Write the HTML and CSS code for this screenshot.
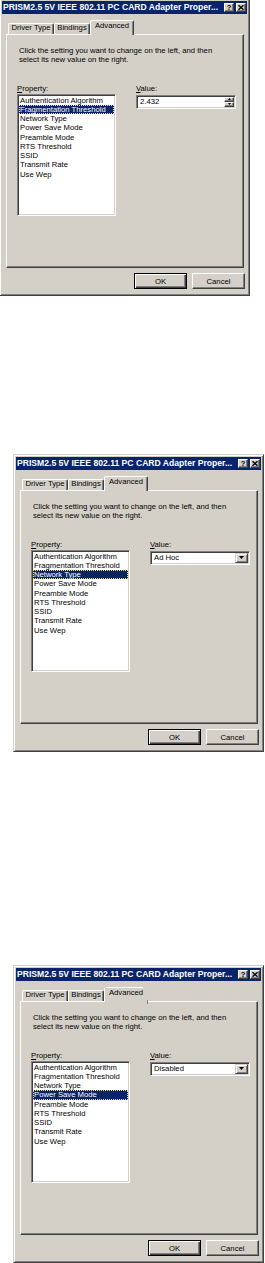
FILE: index.html
```html
<!DOCTYPE html>
<html lang="en">
<head>
    <meta charset="UTF-8">
    <meta name="viewport" content="width=device-width, initial-scale=1.0">
    <title>PRISM2.5 Adapter Properties</title>
    <link rel="stylesheet" href="styles.css">
</head>
<body>
    <div class="page">

        <!-- Fragmentation Threshold selected, spin box value -->
        <div class="dialog dialog-first">
            <div class="titlebar">
                <span class="title">PRISM2.5 5V IEEE 802.11 PC CARD Adapter Proper...</span>
                <span class="title-button">?</span>
                <span class="title-button">
                    <svg width="6" height="5" viewBox="0 0 6 5"><path d="M0.5 0.3L5.5 4.7M5.5 0.3L0.5 4.7" stroke="#000" stroke-width="1.4"/></svg>
                </span>
            </div>
            <div class="dialog-body">
                <div class="tabs">
                    <div class="tab tab-driver">Driver Type</div>
                    <div class="tab tab-bindings">Bindings</div>
                    <div class="tab tab-advanced active"><span class="tab-text">Advanced</span></div>
                </div>
                <div class="panel">
                    <p class="hint">Click the setting you want to change on the left, and then<br>select its new value on the right.</p>
                    <div class="fields">
                        <div class="field-property">
                            <span class="field-label"><u>P</u>roperty:</span>
                            <ul class="property-list">
                                <li>Authentication Algorithm</li>
                                <li class="selected">Fragmentation Threshold</li>
                                <li>Network Type</li>
                                <li>Power Save Mode</li>
                                <li>Preamble Mode</li>
                                <li>RTS Threshold</li>
                                <li>SSID</li>
                                <li>Transmit Rate</li>
                                <li>Use Wep</li>
                            </ul>
                        </div>
                        <div class="field-value">
                            <span class="field-label"><u>V</u>alue:</span>
                            <div class="value-box">
                                <span class="value-text">2.432</span>
                                <span class="spin-buttons">
                                    <span class="spin-button">
                                        <svg width="3" height="2" viewBox="0 0 3 2"><path d="M1.5 0L3 2H0z"/></svg>
                                    </span>
                                    <span class="spin-button">
                                        <svg width="3" height="2" viewBox="0 0 3 2"><path d="M0 0h3L1.5 2z"/></svg>
                                    </span>
                                </span>
                            </div>
                        </div>
                    </div>
                </div>
                <div class="buttons">
                    <button class="btn btn-default">OK</button>
                    <button class="btn">Cancel</button>
                </div>
            </div>
        </div>

        <!-- Network Type selected, drop-down value -->
        <div class="dialog dialog-second">
            <div class="titlebar">
                <span class="title">PRISM2.5 5V IEEE 802.11 PC CARD Adapter Proper...</span>
                <span class="title-button">?</span>
                <span class="title-button">
                    <svg width="6" height="5" viewBox="0 0 6 5"><path d="M0.5 0.3L5.5 4.7M5.5 0.3L0.5 4.7" stroke="#000" stroke-width="1.4"/></svg>
                </span>
            </div>
            <div class="dialog-body">
                <div class="tabs">
                    <div class="tab tab-driver">Driver Type</div>
                    <div class="tab tab-bindings">Bindings</div>
                    <div class="tab tab-advanced active"><span class="tab-text">Advanced</span></div>
                </div>
                <div class="panel">
                    <p class="hint">Click the setting you want to change on the left, and then<br>select its new value on the right.</p>
                    <div class="fields">
                        <div class="field-property">
                            <span class="field-label"><u>P</u>roperty:</span>
                            <ul class="property-list">
                                <li>Authentication Algorithm</li>
                                <li>Fragmentation Threshold</li>
                                <li class="selected">Network Type</li>
                                <li>Power Save Mode</li>
                                <li>Preamble Mode</li>
                                <li>RTS Threshold</li>
                                <li>SSID</li>
                                <li>Transmit Rate</li>
                                <li>Use Wep</li>
                            </ul>
                        </div>
                        <div class="field-value">
                            <span class="field-label"><u>V</u>alue:</span>
                            <div class="value-box">
                                <span class="value-text">Ad Hoc</span>
                                <span class="combo-button">
                                    <svg width="5" height="3" viewBox="0 0 5 3"><path d="M0 0h5L2.5 3z"/></svg>
                                </span>
                            </div>
                        </div>
                    </div>
                </div>
                <div class="buttons">
                    <button class="btn btn-default">OK</button>
                    <button class="btn">Cancel</button>
                </div>
            </div>
        </div>

        <!-- Power Save Mode selected, drop-down value -->
        <div class="dialog dialog-third">
            <div class="titlebar">
                <span class="title">PRISM2.5 5V IEEE 802.11 PC CARD Adapter Proper...</span>
                <span class="title-button">?</span>
                <span class="title-button">
                    <svg width="6" height="5" viewBox="0 0 6 5"><path d="M0.5 0.3L5.5 4.7M5.5 0.3L0.5 4.7" stroke="#000" stroke-width="1.4"/></svg>
                </span>
            </div>
            <div class="dialog-body">
                <div class="tabs">
                    <div class="tab tab-driver">Driver Type</div>
                    <div class="tab tab-bindings">Bindings</div>
                    <div class="tab tab-advanced active glitch"><span class="tab-text">Advanced</span></div>
                </div>
                <div class="panel">
                    <p class="hint">Click the setting you want to change on the left, and then<br>select its new value on the right.</p>
                    <div class="fields">
                        <div class="field-property">
                            <span class="field-label"><u>P</u>roperty:</span>
                            <ul class="property-list">
                                <li>Authentication Algorithm</li>
                                <li>Fragmentation Threshold</li>
                                <li>Network Type</li>
                                <li class="selected">Power Save Mode</li>
                                <li>Preamble Mode</li>
                                <li>RTS Threshold</li>
                                <li>SSID</li>
                                <li>Transmit Rate</li>
                                <li>Use Wep</li>
                            </ul>
                        </div>
                        <div class="field-value">
                            <span class="field-label"><u>V</u>alue:</span>
                            <div class="value-box">
                                <span class="value-text">Disabled</span>
                                <span class="combo-button">
                                    <svg width="5" height="3" viewBox="0 0 5 3"><path d="M0 0h5L2.5 3z"/></svg>
                                </span>
                            </div>
                        </div>
                    </div>
                </div>
                <div class="buttons">
                    <button class="btn btn-default">OK</button>
                    <button class="btn">Cancel</button>
                </div>
            </div>
        </div>

    </div>
</body>
</html>
```

FILE: styles.css
```css
body {
    margin: 0;
    background: #fff;
    font-family: 'Liberation Sans', Arial, sans-serif;
    font-size: 7.7px;
    color: #000;
    overflow: hidden;
}

.page {
    display: flex;
    flex-direction: column;
    align-items: flex-start;
}

/* Window frame */
.dialog {
    box-sizing: border-box;
    width: 251px;
    height: 298px;
    padding: 2px;
    background: #d4d0c8;
    border: 1px solid;
    border-color: #d4d0c8 #404040 #404040 #d4d0c8;
    box-shadow: inset 1px 1px #fff, inset -1px -1px #808080;
    display: flex;
    flex-direction: column;
}

.dialog-first {
    margin: -2px 0 0 -1px;
}

.dialog-second {
    margin: 158px 0 0 13px;
}

.dialog-third {
    margin: 213px 0 0 13px;
}

.titlebar {
    flex: none;
    height: 13px;
    display: flex;
    align-items: center;
    gap: 2px;
    padding: 0 1px;
    background: #0a246a;
    color: #fff;
    font-weight: bold;
    font-size: 8.6px;
}

.title {
    flex: 1;
    white-space: nowrap;
    overflow: hidden;
    line-height: 13px;
}

.title-button {
    box-sizing: border-box;
    width: 10px;
    height: 9px;
    background: #d4d0c8;
    border: 1px solid;
    border-color: #fff #404040 #404040 #fff;
    box-shadow: inset -1px -1px #808080;
    color: #000;
    font-size: 7.5px;
    line-height: 7px;
    display: flex;
    align-items: center;
    justify-content: center;
}

.title-button svg {
    display: block;
}

.dialog-body {
    flex: 1;
    display: flex;
    flex-direction: column;
    padding: 6px 3px 4px 4px;
}

/* Tabs */
.tabs {
    flex: none;
    height: 14px;
    display: flex;
    align-items: flex-end;
    padding-left: 2px;
}

.tab {
    box-sizing: border-box;
    height: 11px;
    border: 1px solid;
    border-bottom: none;
    border-color: #fff #404040 transparent #fff;
    border-radius: 2px 2px 0 0;
    box-shadow: inset -1px 0 #808080;
    text-align: center;
    line-height: 8px;
    white-space: nowrap;
}

.tab-driver {
    width: 46px;
}

.tab-bindings {
    width: 36px;
}

.tab-advanced {
    width: 44px;
}

.tab.active {
    position: relative;
    z-index: 1;
    height: 15px;
    margin-bottom: -1px;
    background: #d4d0c8;
    line-height: 9px;
}

/* the third capture has a half drawn selected tab */
.tab.glitch {
    border-top-color: transparent;
    border-right-color: transparent;
    box-shadow: none;
    background: linear-gradient(#fff, #fff) 2px 0 / 37px 1px no-repeat border-box, #d4d0c8;
}

.tab.glitch::after {
    content: "";
    position: absolute;
    right: -1px;
    bottom: -2px;
    width: 1px;
    height: 4px;
    background: #808080;
}

/* Tab page */
.panel {
    flex: 1;
    border: 1px solid;
    border-color: #fff #404040 #404040 #fff;
    box-shadow: inset -1px -1px #808080;
    padding: 12px 7px 0 10px;
}

.hint {
    margin: 0 0 0 2px;
    line-height: 8.5px;
    white-space: nowrap;
}

.fields {
    display: flex;
    gap: 20px;
    margin-top: 19.5px;
}

.field-label {
    display: block;
    line-height: 9px;
}

.property-list {
    box-sizing: border-box;
    width: 99px;
    height: 122px;
    margin: 1px 0 0;
    padding: 1px;
    list-style: none;
    background: #fff;
    border: 1px solid;
    border-color: #808080 #fff #fff #808080;
    box-shadow: inset 1px 1px #404040, inset -1px -1px #d4d0c8;
}

.property-list li {
    height: 9.25px;
    line-height: 9.25px;
    padding-left: 1px;
    white-space: nowrap;
}

.property-list li.selected {
    background: #0a246a;
    color: #fff;
    outline: 1px dotted #f5db95;
    outline-offset: -1px;
}

.field-value {
    width: 100px;
}

.value-box {
    box-sizing: border-box;
    width: 100px;
    height: 14px;
    margin-top: 2px;
    padding: 1px;
    background: #fff;
    border: 1px solid;
    border-color: #808080 #fff #fff #808080;
    box-shadow: inset 1px 1px #404040, inset -1px -1px #d4d0c8;
    display: flex;
    align-items: center;
}

.value-text {
    flex: 1;
    padding-left: 2px;
    line-height: 10px;
}

.combo-button {
    box-sizing: border-box;
    width: 13px;
    height: 10px;
    background: #d4d0c8;
    border: 1px solid;
    border-color: #d4d0c8 #404040 #404040 #d4d0c8;
    box-shadow: inset 1px 1px #fff, inset -1px -1px #808080;
    display: flex;
    align-items: center;
    justify-content: center;
}

.spin-buttons {
    width: 10px;
    height: 10px;
    display: flex;
    flex-direction: column;
}

.spin-button {
    box-sizing: border-box;
    height: 5px;
    background: #d4d0c8;
    border: 1px solid;
    border-color: #fff #404040 #404040 #fff;
    box-shadow: inset -1px -1px #808080;
    display: flex;
    align-items: center;
    justify-content: center;
}

.combo-button svg,
.spin-button svg {
    display: block;
}

/* OK / Cancel */
.buttons {
    flex: none;
    display: flex;
    justify-content: flex-end;
    gap: 5px;
    margin: 5px -1px 0 0;
}

.btn {
    box-sizing: border-box;
    width: 53px;
    height: 16px;
    padding: 0;
    font: inherit;
    color: #000;
    background: #d4d0c8;
    border: 1px solid;
    border-color: #fff #404040 #404040 #fff;
    box-shadow: inset -1px -1px #808080;
}

.btn-default {
    border-color: #000;
    box-shadow: inset 1px 1px #fff, inset -1px -1px #404040, inset -2px -2px #808080;
}
```
